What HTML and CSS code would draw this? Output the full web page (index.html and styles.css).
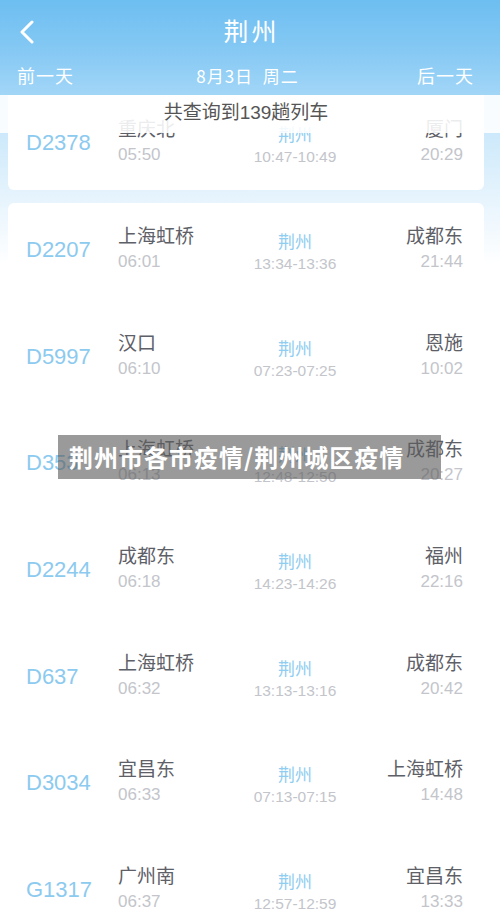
FILE: index.html
```
<!DOCTYPE html>
<html lang="zh-CN">
<head>
<meta charset="utf-8">
<title>荆州</title>
<link rel="stylesheet" href="styles.css">
</head>
<body>
<div class="page">
  <header class="header">
    <div class="title-row">
      <svg class="back" width="16" height="24" viewBox="0 0 16 24"><path d="M13 2 L3 12 L13 22" fill="none" stroke="#fff" stroke-width="3" stroke-linecap="round" stroke-linejoin="round"/></svg>
      <div class="title">荆州</div>
    </div>
    <div class="date-row">
      <span>前一天</span>
      <span>8月3日&nbsp;&nbsp;周二</span>
      <span>后一天</span>
    </div>
  </header>

  <main class="list">
    <div class="banner">共查询到139趟列车</div>

    <section class="card card-first">
      <div class="row row-first">
        <div class="num">D2378</div>
        <div class="st"><div class="name">重庆北</div><div class="time">05:50</div></div>
        <div class="mid"><div class="mname">荆州</div><div class="mtime">10:47-10:49</div></div>
        <div class="st end"><div class="name">厦门</div><div class="time">20:29</div></div>
      </div>
    </section>

    <section class="card">
      <div class="row">
        <div class="num">D2207</div>
        <div class="st"><div class="name">上海虹桥</div><div class="time">06:01</div></div>
        <div class="mid"><div class="mname">荆州</div><div class="mtime">13:34-13:36</div></div>
        <div class="st end"><div class="name">成都东</div><div class="time">21:44</div></div>
      </div>
      <div class="row">
        <div class="num">D5997</div>
        <div class="st"><div class="name">汉口</div><div class="time">06:10</div></div>
        <div class="mid"><div class="mname">荆州</div><div class="mtime">07:23-07:25</div></div>
        <div class="st end"><div class="name">恩施</div><div class="time">10:02</div></div>
      </div>
      <div class="row">
        <div class="num">D353</div>
        <div class="st"><div class="name">上海虹桥</div><div class="time">06:13</div></div>
        <div class="mid"><div class="mname">荆州</div><div class="mtime">12:48-12:50</div></div>
        <div class="st end"><div class="name">成都东</div><div class="time">20:27</div></div>
      </div>
      <div class="row">
        <div class="num">D2244</div>
        <div class="st"><div class="name">成都东</div><div class="time">06:18</div></div>
        <div class="mid"><div class="mname">荆州</div><div class="mtime">14:23-14:26</div></div>
        <div class="st end"><div class="name">福州</div><div class="time">22:16</div></div>
      </div>
      <div class="row">
        <div class="num">D637</div>
        <div class="st"><div class="name">上海虹桥</div><div class="time">06:32</div></div>
        <div class="mid"><div class="mname">荆州</div><div class="mtime">13:13-13:16</div></div>
        <div class="st end"><div class="name">成都东</div><div class="time">20:42</div></div>
      </div>
      <div class="row">
        <div class="num">D3034</div>
        <div class="st"><div class="name">宜昌东</div><div class="time">06:33</div></div>
        <div class="mid"><div class="mname">荆州</div><div class="mtime">07:13-07:15</div></div>
        <div class="st end"><div class="name">上海虹桥</div><div class="time">14:48</div></div>
      </div>
      <div class="row">
        <div class="num">G1317</div>
        <div class="st"><div class="name">广州南</div><div class="time">06:37</div></div>
        <div class="mid"><div class="mname">荆州</div><div class="mtime">12:57-12:59</div></div>
        <div class="st end"><div class="name">宜昌东</div><div class="time">13:33</div></div>
      </div>
    </section>

    <div class="caption">荆州市各市疫情/荆州城区疫情</div>
  </main>
</div>
</body>
</html>
```

FILE: styles.css
```
* { box-sizing: border-box; }
html, body { margin: 0; padding: 0; }
body {
  width: 500px;
  height: 914px;
  overflow: hidden;
  background: #fff;
  font-family: "Liberation Sans", "Noto Sans CJK SC", sans-serif;
}
.page { width: 500px; height: 914px; overflow: hidden; }

.header {
  height: 95px;
  background: linear-gradient(180deg, #6dbef1 0%, #86c9f4 55%, #a2d6f7 100%);
  color: #fff;
}
.title-row {
  height: 60px;
  display: flex;
  align-items: center;
  justify-content: center;
  position: relative;
}
.back { position: absolute; left: 19px; top: 20px; }
.title {
  font-family: "Noto Sans CJK SC", sans-serif;
  font-size: 25px;
  letter-spacing: 3px;
  padding-left: 3px;
}
.date-row {
  height: 30px;
  display: flex;
  justify-content: space-between;
  align-items: center;
  padding: 0 26px 0 17px;
  font-family: "Noto Sans CJK SC", sans-serif;
  font-size: 18px;
  letter-spacing: 1px;
}
.date-row span:nth-child(2) { font-size: 17px; padding-left: 4px; }

.list {
  position: relative;
  height: 819px;
  padding: 0 16px 0 8px;
  background: linear-gradient(180deg, #b9e0f8 0px, #cfeafb 45px, #e9f5fd 110px, #ffffff 170px);
}
.banner {
  position: absolute;
  left: 0; top: 0;
  width: 500px;
  height: 38px;
  background: rgba(255,255,255,0.88);
  color: #555;
  font-size: 19px;
  line-height: 36px;
  text-align: center;
  padding-right: 8px;
  z-index: 2;
}

.card {
  background: #fff;
  border-radius: 6px;
  margin-bottom: 13px;
}
.card-first { border-radius: 0 0 6px 6px; }

.row {
  height: 106.7px;
  display: grid;
  grid-template-columns: 92px 107px 140px 98px;
  padding: 22px 21px 0 18px;
  align-items: start;
}
.row-first { height: 95px; padding-top: 23px; }

.num {
  font-size: 22px;
  color: #8ccaef;
  line-height: 50px;
}
.st .name {
  font-size: 19px;
  line-height: 24px;
  color: #5e6068;
  white-space: nowrap;
}
.st .time {
  font-size: 17px;
  line-height: 26px;
  color: #c3c5cb;
}
.st.end { text-align: right; }
.mid { text-align: center; padding-top: 8px; }
.mname {
  font-size: 17px;
  line-height: 20px;
  color: #8fcdf1;
}
.mtime {
  font-size: 15.5px;
  line-height: 22px;
  color: #c3c5cb;
}

.caption {
  position: absolute;
  left: 58px;
  top: 340px;
  width: 383px;
  height: 44px;
  background: rgba(92,92,92,0.62);
  color: #fff;
  font-family: "Noto Sans CJK SC", sans-serif;
  font-weight: 700;
  font-size: 24px;
  letter-spacing: 1px;
  line-height: 44px;
  padding-left: 11px;
  white-space: nowrap;
  z-index: 3;
}
```
